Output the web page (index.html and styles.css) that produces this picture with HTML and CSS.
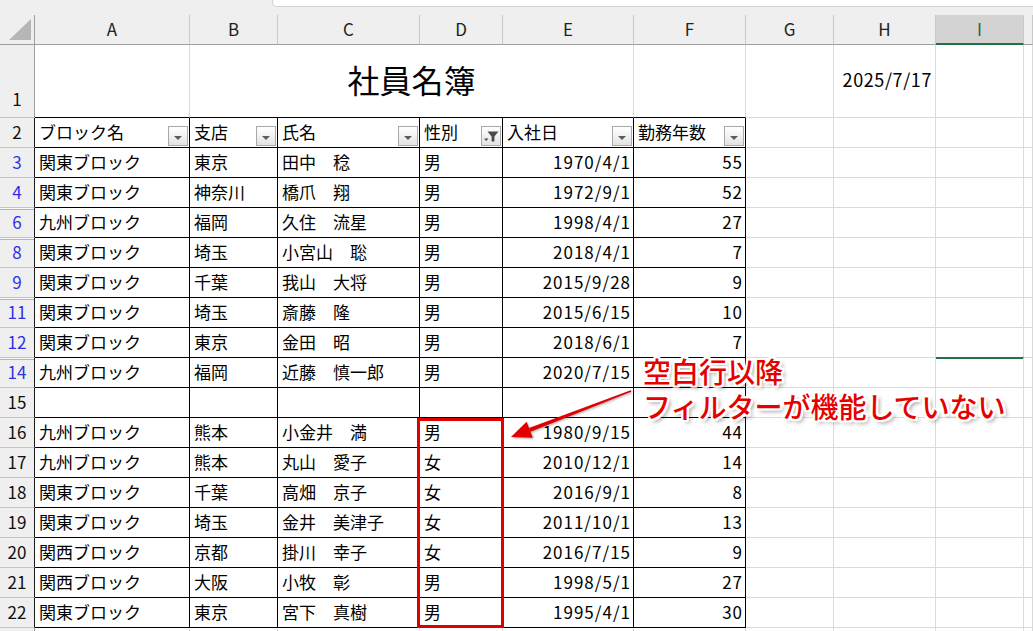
FILE: index.html
```html
<!DOCTYPE html>
<html lang="ja">
<head>
<meta charset="utf-8">
<title>社員名簿</title>
<link rel="stylesheet" href="styles.css">
</head>
<body>
<div class="page">
  <div class="top"><div class="fx"></div></div>

  <div class="row hdr">
    <div class="ch corner"><svg width="34" height="29" viewBox="0 0 34 29"><polygon points="9,25 31,4 31,25" fill="#b6b6b6"/></svg></div>
    <div class="ch">A</div><div class="ch">B</div><div class="ch">C</div><div class="ch">D</div><div class="ch">E</div><div class="ch">F</div><div class="ch">G</div><div class="ch">H</div><div class="ch sel">I</div><div class="ch"></div>
  </div>

  <div class="row r1">
    <div class="rh r1h">1</div>
    <div class="c tb"></div>
    <div class="c tb title">社員名簿</div>
    <div class="c tb"></div>
    <div class="c"></div>
    <div class="c date">2025/7/17</div>
    <div class="c"></div>
    <div class="c"></div>
  </div>

  <div class="row">
    <div class="rh tr">2</div>
    <div class="c t hc"><span>ブロック名</span><i class="fb"></i></div>
    <div class="c t hc"><span>支店</span><i class="fb"></i></div>
    <div class="c t hc"><span>氏名</span><i class="fb"></i></div>
    <div class="c t hc"><span>性別</span><i class="fb on"><svg width="16" height="14" viewBox="0 0 16 14"><path d="M4.5 2.5H15.5L11.4 7.5V12.5H8.6V7.5Z" fill="#4a4a4a"/><path d="M1 9.5H5.4L3.2 12Z" fill="#4a4a4a"/></svg></i></div>
    <div class="c t hc"><span>入社日</span><i class="fb"></i></div>
    <div class="c t hc"><span>勤務年数</span><i class="fb"></i></div>
    <div class="c"></div><div class="c"></div><div class="c"></div><div class="c"></div>
  </div>

  <div class="row">
    <div class="rh tr blue">3</div>
    <div class="c t">関東ブロック</div><div class="c t">東京</div><div class="c t">田中　稔</div><div class="c t">男</div><div class="c t n">1970/4/1</div><div class="c t n">55</div>
    <div class="c"></div><div class="c"></div><div class="c"></div><div class="c"></div>
  </div>
  <div class="row">
    <div class="rh tr blue">4</div>
    <div class="c t">関東ブロック</div><div class="c t">神奈川</div><div class="c t">橋爪　翔</div><div class="c t">男</div><div class="c t n">1972/9/1</div><div class="c t n">52</div>
    <div class="c"></div><div class="c"></div><div class="c"></div><div class="c"></div>
  </div>
  <div class="row">
    <div class="rh tr blue hid">6</div>
    <div class="c t">九州ブロック</div><div class="c t">福岡</div><div class="c t">久住　流星</div><div class="c t">男</div><div class="c t n">1998/4/1</div><div class="c t n">27</div>
    <div class="c"></div><div class="c"></div><div class="c"></div><div class="c"></div>
  </div>
  <div class="row">
    <div class="rh tr blue hid">8</div>
    <div class="c t">関東ブロック</div><div class="c t">埼玉</div><div class="c t">小宮山　聡</div><div class="c t">男</div><div class="c t n">2018/4/1</div><div class="c t n">7</div>
    <div class="c"></div><div class="c"></div><div class="c"></div><div class="c"></div>
  </div>
  <div class="row">
    <div class="rh tr blue">9</div>
    <div class="c t">関東ブロック</div><div class="c t">千葉</div><div class="c t">我山　大将</div><div class="c t">男</div><div class="c t n">2015/9/28</div><div class="c t n">9</div>
    <div class="c"></div><div class="c"></div><div class="c"></div><div class="c"></div>
  </div>
  <div class="row">
    <div class="rh tr blue hid">11</div>
    <div class="c t">関東ブロック</div><div class="c t">埼玉</div><div class="c t">斎藤　隆</div><div class="c t">男</div><div class="c t n">2015/6/15</div><div class="c t n">10</div>
    <div class="c"></div><div class="c"></div><div class="c"></div><div class="c"></div>
  </div>
  <div class="row">
    <div class="rh tr blue">12</div>
    <div class="c t">関東ブロック</div><div class="c t">東京</div><div class="c t">金田　昭</div><div class="c t">男</div><div class="c t n">2018/6/1</div><div class="c t n">7</div>
    <div class="c"></div><div class="c"></div><div class="c selline"></div><div class="c"></div>
  </div>
  <div class="row">
    <div class="rh tr blue hid">14</div>
    <div class="c t">九州ブロック</div><div class="c t">福岡</div><div class="c t">近藤　慎一郎</div><div class="c t">男</div><div class="c t n">2020/7/15</div><div class="c t n"></div>
    <div class="c"></div><div class="c"></div><div class="c"></div><div class="c"></div>
  </div>
  <div class="row">
    <div class="rh tr">15</div>
    <div class="c t"></div><div class="c t"></div><div class="c t"></div><div class="c t"></div><div class="c t"></div><div class="c t"></div>
    <div class="c"></div><div class="c"></div><div class="c"></div><div class="c"></div>
  </div>
  <div class="row">
    <div class="rh tr">16</div>
    <div class="c t">九州ブロック</div><div class="c t">熊本</div><div class="c t">小金井　満</div><div class="c t">男</div><div class="c t n">1980/9/15</div><div class="c t n">44</div>
    <div class="c"></div><div class="c"></div><div class="c"></div><div class="c"></div>
  </div>
  <div class="row">
    <div class="rh tr">17</div>
    <div class="c t">九州ブロック</div><div class="c t">熊本</div><div class="c t">丸山　愛子</div><div class="c t">女</div><div class="c t n">2010/12/1</div><div class="c t n">14</div>
    <div class="c"></div><div class="c"></div><div class="c"></div><div class="c"></div>
  </div>
  <div class="row">
    <div class="rh tr">18</div>
    <div class="c t">関東ブロック</div><div class="c t">千葉</div><div class="c t">高畑　京子</div><div class="c t">女</div><div class="c t n">2016/9/1</div><div class="c t n">8</div>
    <div class="c"></div><div class="c"></div><div class="c"></div><div class="c"></div>
  </div>
  <div class="row">
    <div class="rh tr">19</div>
    <div class="c t">関東ブロック</div><div class="c t">埼玉</div><div class="c t">金井　美津子</div><div class="c t">女</div><div class="c t n">2011/10/1</div><div class="c t n">13</div>
    <div class="c"></div><div class="c"></div><div class="c"></div><div class="c"></div>
  </div>
  <div class="row">
    <div class="rh tr">20</div>
    <div class="c t">関西ブロック</div><div class="c t">京都</div><div class="c t">掛川　幸子</div><div class="c t">女</div><div class="c t n">2016/7/15</div><div class="c t n">9</div>
    <div class="c"></div><div class="c"></div><div class="c"></div><div class="c"></div>
  </div>
  <div class="row">
    <div class="rh tr">21</div>
    <div class="c t">関西ブロック</div><div class="c t">大阪</div><div class="c t">小牧　彰</div><div class="c t">男</div><div class="c t n">1998/5/1</div><div class="c t n">27</div>
    <div class="c"></div><div class="c"></div><div class="c"></div><div class="c"></div>
  </div>
  <div class="row">
    <div class="rh tr">22</div>
    <div class="c t">関東ブロック</div><div class="c t">東京</div><div class="c t">宮下　真樹</div><div class="c t">男</div><div class="c t n">1995/4/1</div><div class="c t n">30</div>
    <div class="c"></div><div class="c"></div><div class="c"></div><div class="c"></div>
  </div>
  <div class="row">
    <div class="rh"></div>
    <div class="c"></div><div class="c"></div><div class="c"></div><div class="c"></div><div class="c"></div><div class="c"></div>
    <div class="c"></div><div class="c"></div><div class="c"></div><div class="c"></div>
  </div>

  <div class="redbox"></div>
  <svg class="arrow" width="1033" height="631" viewBox="0 0 1033 631">
    <polygon points="631.3,391.7 630.7,390.3 529.0,427.9 530.4,431.7" fill="#e00000"/>
    <polygon points="511,437 532.8,437.8 526.6,421.8" fill="#e00000"/>
  </svg>
  <div class="note">空白行以降<br>フィルターが機能していない</div>
</div>
</body>
</html>
```

FILE: styles.css
```css
* { box-sizing: border-box; }

body {
  margin: 0;
  background: #ffffff;
  font-family: "Noto Sans CJK JP", "Noto Sans", sans-serif;
  font-size: 17px;
  color: #000;
}

.page {
  position: relative;
  width: 1033px;
  height: 631px;
  overflow: hidden;
}

.top {
  height: 15px;
  background: #efefef;
  display: flex;
}

.fx {
  flex: 1;
  margin-left: 272px;
  height: 7px;
  background: #fff;
  border-left: 1px solid #d3d3d3;
  border-bottom: 1px solid #d3d3d3;
  border-bottom-left-radius: 5px;
}

.row {
  display: grid;
  grid-template-columns: 35px 155px 88px 142px 83px 131px 112px 88px 102px 88px 1fr;
  height: 30px;
}

.r1 { height: 73px; }

/* column header */
.ch {
  background: #efefef;
  border-right: 1px solid #c8c8c8;
  border-bottom: 1px solid #9e9e9e;
  display: flex;
  align-items: center;
  justify-content: center;
  color: #222;
  padding-bottom: 2px;
}

.corner {
  border-right-color: #9e9e9e;
  padding: 0;
  align-items: flex-start;
}

.corner svg { display: block; }

.ch.sel {
  background: #d3d3d3;
  border-bottom: 2px solid #217346;
  color: #1d6a3d;
}

/* row header */
.rh {
  background: #efefef;
  border-right: 1px solid #9e9e9e;
  border-bottom: 1px solid #c4c4c4;
  display: flex;
  align-items: center;
  justify-content: center;
  color: #111;
  padding-bottom: 2px;
}

.rh.tr { border-right-color: #1a1a1a; }
.rh.blue { color: #2f2fe8; }
.rh.hid { box-shadow: inset 0 1px 0 #f8f8f8, inset 0 2px 0 #b4b4b4; }

.r1h {
  align-items: flex-end;
  padding-bottom: 6px;
}

/* cells */
.c {
  border-right: 1px solid #dadada;
  border-bottom: 1px solid #dadada;
  display: flex;
  align-items: center;
  padding: 0 3px 3px 4px;
  white-space: nowrap;
  min-width: 0;
}

.c.t { border-color: #000; }
.c.tb { border-bottom-color: #000; }

.c.n {
  justify-content: flex-end;
  letter-spacing: 1px;
  padding-right: 2px;
}

.title {
  grid-column: span 4;
  justify-content: center;
  font-size: 32px;
  padding: 0 0 4px 0;
}

.date {
  justify-content: flex-end;
  font-size: 18px;
  letter-spacing: 0.6px;
  padding-right: 3px;
  padding-bottom: 4px;
}

.hc { padding-right: 0; }
.hc span { flex: 1; }

.fb {
  flex: none;
  align-self: flex-end;
  width: 20px;
  height: 20px;
  margin: 0 1px -2px 0;
  border: 1px solid #a9a9a9;
  background: linear-gradient(#ffffff, #e3e3e3);
  display: flex;
  align-items: center;
  justify-content: center;
}

.fb::after {
  content: "";
  border-left: 4px solid transparent;
  border-right: 4px solid transparent;
  border-top: 4px solid #5c5c5c;
  margin-top: 3px;
}

.fb.on::after { display: none; }
.fb.on svg { display: block; }

.selline {
  border-bottom-color: #217346;
  box-shadow: 0 1px 0 #217346;
}

/* overlays */
.redbox {
  position: absolute;
  left: 417px;
  top: 418px;
  width: 87px;
  height: 210px;
  border: 3px solid #e00000;
}

.arrow {
  position: absolute;
  left: 0;
  top: 0;
  pointer-events: none;
  filter: drop-shadow(1px 1px 1px rgba(0, 0, 0, 0.35));
}

.note {
  position: absolute;
  left: 643px;
  top: 354px;
  font-size: 28px;
  line-height: 35px;
  font-weight: 500;
  color: #e60000;
  white-space: nowrap;
  text-shadow:
    -2px -2px 0 #fff, 2px -2px 0 #fff, -2px 2px 0 #fff, 2px 2px 0 #fff,
    0 -2px 0 #fff, 0 2px 0 #fff, -2px 0 0 #fff, 2px 0 0 #fff,
    3px 3px 4px rgba(0, 0, 0, 0.45);
}
```
